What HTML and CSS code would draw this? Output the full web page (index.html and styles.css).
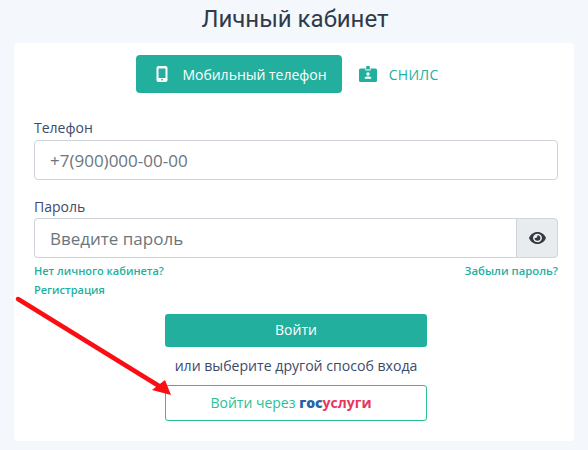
FILE: index.html
```html
<!DOCTYPE html>
<html>
<head>
    <title>Личный кабинет</title>
    <link rel="stylesheet" href="styles.css">
</head>
<body>
    <h1 class="page-title">Личный кабинет</h1>

    <div class="card">
        <div class="tabs">
            <a class="tab active" href="#">
                <svg class="tab-icon" width="12" height="16" viewBox="0 0 12 16"><path fill="currentColor" d="M2.5 0h7A2 2 0 0 1 11.500 2v12a2 2 0 0 1-2 2h-7a2 2 0 0 1-2-2V2a2 2 0 0 1 2-2zM2.500 2.500v9.500h7V2.500zM6 12.800a.9.9 0 1 0 0 1.800.9.9 0 0 0 0-1.800z"/></svg>
                Мобильный телефон
            </a>
            <a class="tab tab-snils" href="#">
                <svg class="tab-icon" width="18" height="16" viewBox="0 0 18 16"><path fill="currentColor" fill-rule="evenodd" d="M1.500 2.500H6.500V4.500H11.500V2.500H16.500A1.500 1.500 0 0 1 18 4V14.500A1.500 1.500 0 0 1 16.500 16H1.500A1.500 1.500 0 0 1 0 14.500V4A1.500 1.500 0 0 1 1.500 2.500zM9 6.300a1.700 1.700 0 1 0 0 3.400 1.700 1.700 0 0 0 0-3.400zM5.800 11.200v1.600h6.400v-1.600c-1-.9-5.400-.9-6.400 0z"/><rect fill="currentColor" x="7.200" y="0" width="3.600" height="3.500" rx=".6"/></svg>
                СНИЛС
            </a>
        </div>

        <form class="login-form">
            <label class="field-label">Телефон</label>
            <input class="field-input" type="text" placeholder="+7(900)000-00-00">

            <label class="field-label label-password">Пароль</label>
            <div class="input-group">
                <input class="field-input" type="password" placeholder="Введите пароль">
                <span class="eye-btn">
                    <svg width="17" height="12" viewBox="0 0 16 12" preserveAspectRatio="none"><path fill="#343a40" fill-rule="evenodd" d="M8 0c3.700 0 6.700 2.400 8 6-1.300 3.600-4.300 6-8 6S1.300 9.600 0 6c1.300-3.600 4.300-6 8-6zm0 1.800a4.200 4.200 0 1 0 0 8.400 4.200 4.200 0 0 0 0-8.400zm0 1.500A2.700 2.700 0 1 1 5.300 6c.7.300 1.900-.1 2.300-.9.300-.6.300-1.200.4-1.800z"/></svg>
                </span>
            </div>

            <div class="links">
                <div class="links-left">
                    <a href="#">Нет личного кабинета?</a>
                    <a href="#">Регистрация</a>
                </div>
                <a class="link-forgot" href="#">Забыли пароль?</a>
            </div>

            <div class="actions">
                <button class="btn-login" type="button">Войти</button>
                <p class="alt-text">или выберите другой способ входа</p>
                <a class="btn-gosuslugi" href="#">Войти через <span class="gos"><b>гос</b><i>услуги</i></span></a>
            </div>
        </form>
    </div>

    <!-- Red annotation arrow over the form -->
    <svg class="arrow" width="588" height="450" viewBox="0 0 588 450">
        <path d="M18 299 L159 386" stroke="#fb0d14" stroke-width="4.500" stroke-linecap="round" fill="none"/>
        <path d="M171 395 L152 390 L165 380 Z" fill="#fb0d14"/>
    </svg>
</body>
</html>
```

FILE: styles.css
```css
/* General Body Styles */
body {
    font-family: "Open Sans", "Noto Sans", sans-serif;
    background-color: #f4f7fc;
    margin: 0;
    padding: 0 14px;
    height: 450px;
    overflow: hidden;
    color: #3c4a6b;
}

.page-title {
    margin: 0;
    height: 43px;
    padding-left: 2px;
    line-height: 39px;
    text-align: center;
    font-family: Roboto, sans-serif;
    font-size: 24px;
    font-weight: 400;
    color: #2f3a4a;
}

/* Card */
.card {
    background: #fff;
    border-radius: 4px;
    padding: 12px 16px 20px 20px;
    height: 398px;
    box-sizing: border-box;
}

/* Tabs */
.tabs {
    display: flex;
    justify-content: center;
}

.tab {
    display: flex;
    align-items: center;
    height: 38px;
    padding: 0 15px 0 20px;
    border-radius: 4px;
    font-size: 14px;
    color: #23af9e;
    text-decoration: none;
}

.tab.active {
    background-color: #23af9e;
    color: #fff;
}

.tab-icon {
    margin-right: 14px;
}

.tab-snils {
    padding: 0 17px;
    letter-spacing: 0.3px;
}

.tab-snils .tab-icon {
    margin-right: 12px;
}

/* Form */
.login-form {
    margin-top: 25px;
}

.field-label {
    display: block;
    height: 22px;
    line-height: 20px;
    font-size: 14px;
}

.label-password {
    height: 21px;
    margin-top: 17px;
}

.field-input {
    display: block;
    width: 100%;
    height: 40px;
    box-sizing: border-box;
    padding: 0 15px;
    border: 1px solid #ced4da;
    border-radius: 4px;
    font-family: inherit;
    font-size: 17px;
    outline: none;
}

.field-input::placeholder {
    color: #6c757d;
}

.input-group {
    display: flex;
}

.input-group .field-input {
    flex: 1;
    border-radius: 4px 0 0 4px;
    border-right: none;
}

.eye-btn {
    width: 42px;
    box-sizing: border-box;
    display: flex;
    align-items: center;
    justify-content: center;
    background-color: #e9ecef;
    border: 1px solid #ced4da;
    border-radius: 0 4px 4px 0;
}

/* Links */
.links {
    display: flex;
    justify-content: space-between;
    margin-top: 4px;
    font-size: 11px;
    font-weight: 600;
    line-height: 18px;
}

.links a {
    color: #23af9e;
    text-decoration: none;
}

.links-left a {
    display: block;
}

.links-left a + a {
    margin-top: 1px;
}

.link-forgot {
    font-size: 11.300px;
}

/* Actions */
.actions {
    width: 262px;
    margin: 15px auto 0;
    text-align: center;
}

.btn-login {
    display: block;
    width: 100%;
    height: 33px;
    padding-bottom: 3px;
    border: none;
    border-radius: 3px;
    background-color: #23af9e;
    color: #fff;
    font-family: inherit;
    font-size: 14px;
}

.alt-text {
    margin: 9px 0 9px;
    line-height: 20px;
    font-size: 14.100px;
    white-space: nowrap;
}

.btn-gosuslugi {
    display: block;
    height: 36px;
    line-height: 33px;
    box-sizing: border-box;
    padding-right: 10px;
    border: 1px solid #2bbf95;
    border-radius: 3px;
    color: #2bbf95;
    font-size: 14px;
    text-decoration: none;
}

.gos {
    font-weight: 700;
}

.gos b {
    color: #2563a8;
}

.gos i {
    font-style: normal;
    color: #e8365d;
}

.arrow {
    position: absolute;
    left: 0;
    top: 0;
    pointer-events: none;
}
```
